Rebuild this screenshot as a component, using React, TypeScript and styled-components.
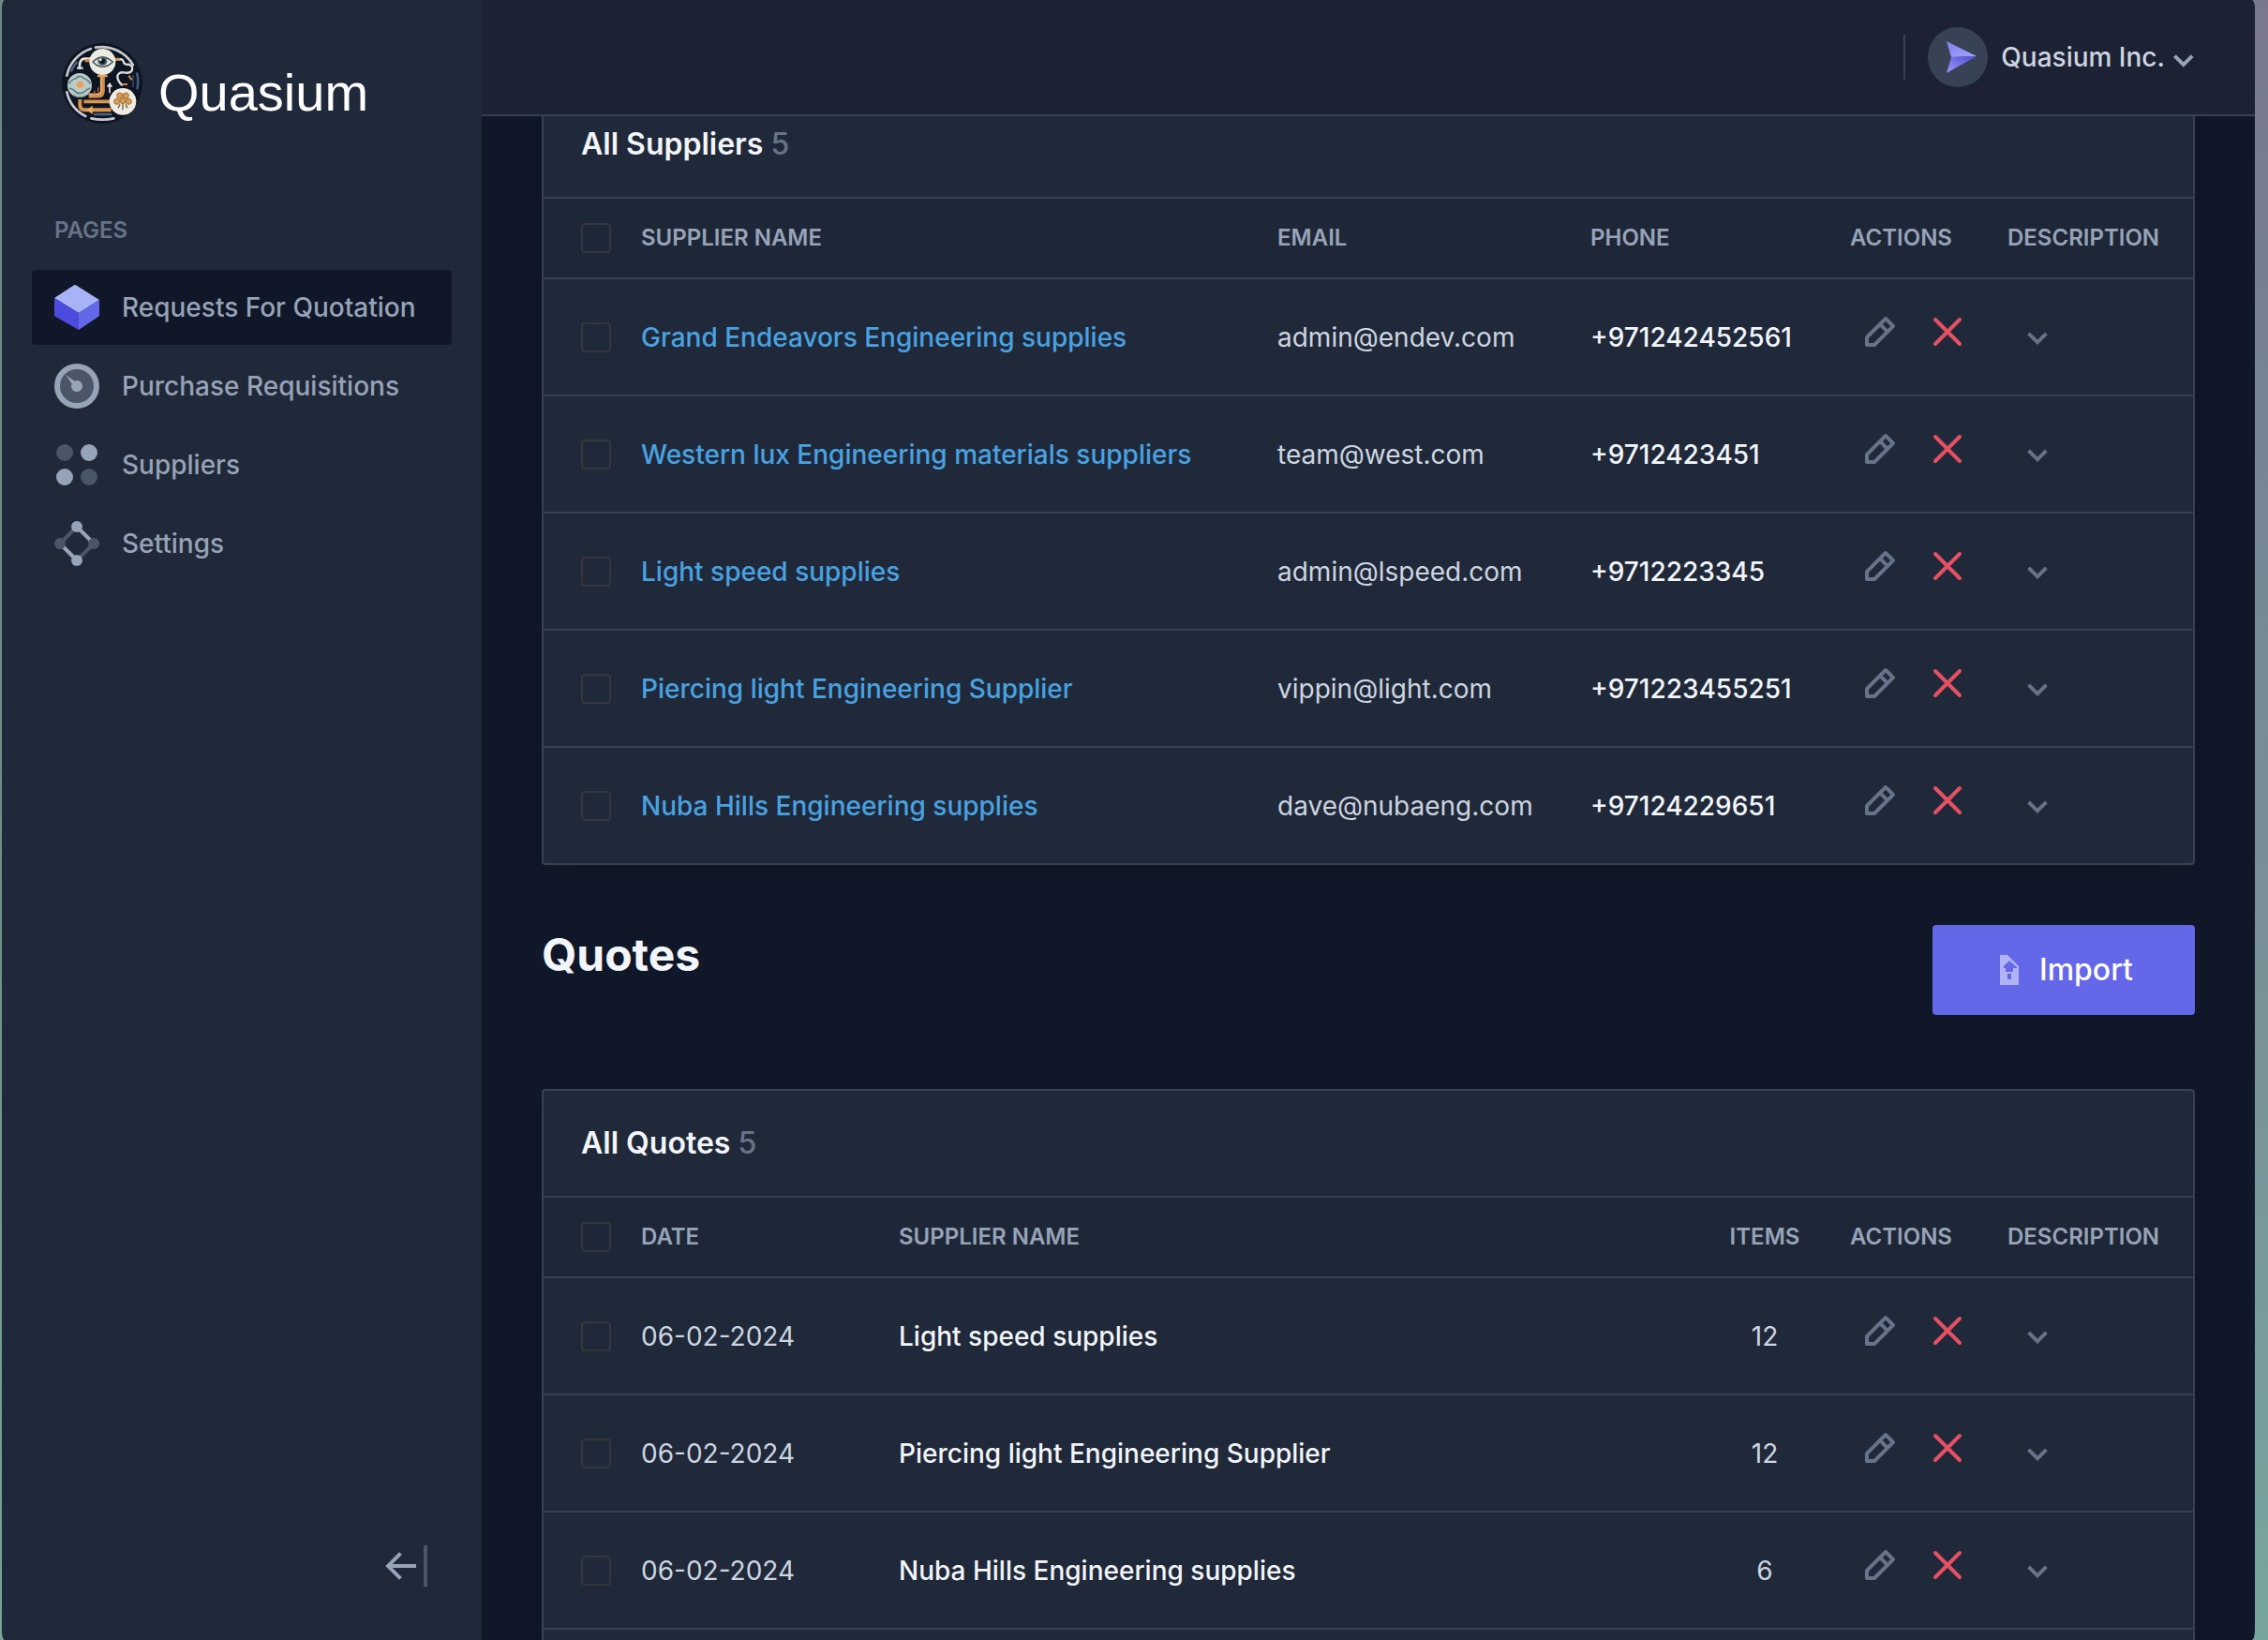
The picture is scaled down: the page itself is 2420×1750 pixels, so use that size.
import React from 'react';
import styled, { createGlobalStyle } from 'styled-components';

const color = {
  page: '#101728',
  panel: '#202939',
  head: '#1e2737',
  header: '#1c2234',
  line: '#364152',
  muted: '#667389',
  soft: '#97a3b7',
  text: '#cdd5e0',
  bright: '#f2f5f9',
  link: '#49a2e1',
  danger: '#e75064',
  accent: '#6468e8',
  box: '#34363b',
  dim: '#4a5568',
};

const GlobalStyle = createGlobalStyle`
  *, *::before, *::after { box-sizing: border-box; }
  body {
    margin: 0;
    font-family: Inter, "Liberation Sans", sans-serif;
    font-size: 28px;
    line-height: 44px;
    color: ${color.text};
    -webkit-font-smoothing: antialiased;
  }
  h1, h2, h3, p { margin: 0; }
  button { display: block; font: inherit; color: inherit; background: none; border: 0; padding: 0; cursor: pointer; }
  a { color: inherit; text-decoration: none; }
  svg { display: block; flex: none; }
`;

const Desktop = styled.div`
  height: 100vh;
  padding: 0 14px 0 2px;
  overflow: hidden;
  background:
    linear-gradient(#6f8a86, #6f8e88 50%, #74a598) 0 0 / 50% 100% no-repeat,
    linear-gradient(#7a788f, #758494 25%, #7a9097 60%, #76a59f);
`;

const Window = styled.div`
  display: flex;
  height: 100%;
  overflow: hidden;
  border-radius: 3px / 12px;
  background: ${color.page};
`;

const Sidebar = styled.aside`
  flex: none;
  display: flex;
  flex-direction: column;
  width: 512px;
  padding: 45px 32px 55px;
  background: ${color.panel};
`;

const Brand = styled.a`
  display: flex;
  align-items: flex-end;
  gap: 16px;
  margin: 0 0 95px 31px;
`;

const BrandName = styled.span`
  font-family: "Liberation Sans", Arial, sans-serif;
  font-size: 56px;
  line-height: 68px;
  color: #fff;
`;

const NavLabel = styled.h3`
  padding-left: 24px;
  margin-bottom: 24px;
  font-size: 24px;
  line-height: 36px;
  font-weight: 600;
  text-transform: uppercase;
  color: ${color.muted};
`;

const NavList = styled.nav`
  display: flex;
  flex-direction: column;
  gap: 4px;
`;

const NavItem = styled.a<{ $active?: boolean }>`
  display: flex;
  align-items: center;
  gap: 24px;
  height: 80px;
  padding: 0 24px;
  border-radius: 4px;
  font-weight: 500;
  color: ${color.soft};
  background: ${(p) => (p.$active ? color.page : 'transparent')};
`;

const Collapse = styled.button`
  align-self: flex-end;
  margin: auto 24px 0 0;
`;

const Main = styled.div`
  flex: 1;
  min-width: 0;
  display: flex;
  flex-direction: column;
`;

const Header = styled.header`
  position: relative;
  z-index: 1;
  flex: none;
  display: flex;
  align-items: center;
  justify-content: flex-end;
  gap: 24px;
  height: 124px;
  padding: 0 64px;
  border-bottom: 2px solid ${color.line};
  background: ${color.header};
`;

const Divider = styled.span`
  width: 2px;
  height: 48px;
  background: ${color.line};
`;

const UserButton = styled.button`
  display: flex;
  align-items: center;
  gap: 8px;
  font-weight: 500;
`;

const UserName = styled.span`
  padding-left: 6px;
`;

/* The list is scrolled so that its first card slides under the header. */
const Content = styled.main`
  margin-top: -28px;
  padding: 0 64px;
`;

const Card = styled.section<{ $continues?: boolean }>`
  border: 2px solid ${color.line};
  border-radius: 4px;
  padding-bottom: ${(p) => (p.$continues ? '48px' : '0')};
  background: ${color.panel};
  box-shadow: 0 20px 30px -6px rgba(0, 0, 0, 0.06);
`;

const CardTitle = styled.h2`
  padding: 32px 40px;
  font-size: 32px;
  line-height: 48px;
  font-weight: 600;
  color: ${color.bright};
`;

const Count = styled.span`
  font-weight: 500;
  color: ${color.muted};
`;

const Table = styled.table<{ $continues?: boolean }>`
  width: 100%;
  table-layout: fixed;
  border-collapse: separate;
  border-spacing: 0;

  ${(p) => (p.$continues ? '' : `tbody tr:last-child td { border-bottom: 0; height: 123px; }`)}
`;

const Th = styled.th<{ $w?: number; $center?: boolean }>`
  width: ${(p) => (p.$w ? `${p.$w}px` : 'auto')};
  height: 88px;
  padding: 0 16px;
  border-top: 2px solid ${color.line};
  border-bottom: 2px solid ${color.line};
  background: ${color.head};
  font-size: 24px;
  line-height: 36px;
  font-weight: 600;
  text-align: ${(p) => (p.$center ? 'center' : 'left')};
  text-transform: uppercase;
  white-space: nowrap;
  color: ${color.soft};

  &:first-child { padding-left: 40px; }
`;

const Td = styled.td<{ $tone?: string; $strong?: boolean; $center?: boolean }>`
  height: 125px;
  padding: 0 16px;
  border-bottom: 2px solid ${color.line};
  font-weight: ${(p) => (p.$strong ? 500 : 400)};
  text-align: ${(p) => (p.$center ? 'center' : 'left')};
  white-space: nowrap;
  color: ${(p) => p.$tone ?? color.text};

  &:first-child { padding-left: 40px; }
`;

const Check = styled.input.attrs({ type: 'checkbox' })`
  appearance: none;
  display: block;
  width: 32px;
  height: 32px;
  margin: 0;
  border: 2px solid ${color.box};
  border-radius: 4px;

  &:checked { background: ${color.accent}; }
`;

const Actions = styled.div`
  display: flex;
  align-items: center;
  gap: 20px;
  padding-bottom: 12px;
`;

const SectionHead = styled.div`
  display: flex;
  align-items: flex-start;
  justify-content: space-between;
  margin: 64px 0 79px;
`;

const SectionTitle = styled.h1`
  font-size: 48px;
  line-height: 64px;
  font-weight: 700;
  color: ${color.bright};
`;

const ImportButton = styled.button`
  display: flex;
  align-items: center;
  gap: 16px;
  height: 96px;
  padding: 0 66px;
  border-radius: 4px;
  background: ${color.accent};
  font-size: 32px;
  line-height: 48px;
  font-weight: 500;
  color: #fff;
`;

const LogoMark = () => (
  <svg width="88" height="88" viewBox="45 45 264 264" fill="none" aria-hidden="true">
    <circle cx="177" cy="177" r="129" fill="#0d1422" />
    <g stroke="#c9cad0" strokeWidth="8" strokeLinecap="round">
      <path d="M64 152A116 116 0 0 1 141 66" />
      <path d="M156 62A117 117 0 0 1 276 118" />
      <path d="M64 205A116 116 0 0 0 124 282" />
      <path d="M142 289Q178 297 214 289" />
    </g>
    <path d="M288 142A117 117 0 0 1 289 196" stroke="#3f5a7c" strokeWidth="8" />
    <path d="M276 150V190" stroke="#2d4462" strokeWidth="5" />
    <path d="M78 140Q86 118 98 108M150 276H208" stroke="#4c6484" strokeWidth="7" />
    <path d="M138 98H120Q106 100 105 118V132" stroke="#e8e6e0" strokeWidth="8" />
    <path d="M96 128H116" stroke="#c9dbe0" strokeWidth="7" />
    <path d="M122 104H138M218 100H232" stroke="#d58b45" strokeWidth="10" />
    <path d="M234 100Q244 98 246 110Q250 118 262 116Q278 122 272 136Q266 146 246 142Q226 140 226 158Q228 172 240 182" stroke="#dcdbda" strokeWidth="7" strokeLinecap="round" />
    <path d="M240 180H258M262 152L272 166" stroke="#cf8a4c" strokeWidth="6" />
    <path d="M178 150V200Q178 216 162 216H134" stroke="#d08d4c" strokeWidth="15" />
    <path d="M174 152V198Q174 212 160 212H134" stroke="#eab878" strokeWidth="4" />
    <path d="M162 153H194" stroke="#e8a25a" strokeWidth="8" />
    <path d="M118 235H204" stroke="#d9944f" strokeWidth="11" />
    <path d="M106 228V248Q108 262 124 262H206" stroke="#d9944f" strokeWidth="12" />
    <path d="M146 248L128 262L146 276Z" fill="#f0ad66" />
    <path d="M201 208V182M194 188L201 178L208 188" stroke="#e9e3e0" strokeWidth="5" />
    <path d="M164 190V206M152 200V212" stroke="#c2603c" strokeWidth="4" />
    <circle cx="178" cy="108" r="42" fill="#ecebe2" />
    <path d="M147 108Q178 78 211 108Q178 140 147 108Z" fill="#dfe6e2" stroke="#3c4a4e" strokeWidth="4" />
    <circle cx="178" cy="106" r="15" fill="#55686b" />
    <circle cx="178" cy="106" r="9" fill="#101820" />
    <circle cx="172" cy="101" r="4" fill="#f5f5f0" />
    <circle cx="105" cy="183" r="39" fill="#b9ccc9" />
    <path d="M70 178Q84 162 92 162Q105 146 120 162Q130 164 140 178" stroke="#5f7b80" strokeWidth="5" />
    <path d="M72 192Q86 196 92 204Q105 214 120 204Q128 196 138 192" stroke="#5f7b80" strokeWidth="5" />
    <path d="M84 214Q105 226 126 214" stroke="#7d999a" strokeWidth="4" />
    <circle cx="106" cy="181" r="11" fill="#e8a256" />
    <circle cx="243" cy="235" r="43" fill="#efebe0" />
    <g fill="#dd9f52" stroke="#9a6c38" strokeWidth="3">
      <circle cx="233" cy="216" r="9" />
      <circle cx="253" cy="216" r="9" />
      <circle cx="224" cy="235" r="9" />
      <circle cx="262" cy="235" r="9" />
      <circle cx="243" cy="233" r="9" />
    </g>
    <path d="M243 242V262M234 244L228 256M252 244L258 256" stroke="#6f5a42" strokeWidth="4" />
  </svg>
);

const CubeIcon = () => (
  <svg width="48" height="48" viewBox="0 0 24 24" aria-hidden="true">
    <path fill="#a8b3f7" d="M13 15l11-7L11.504.136a1 1 0 00-1.019.007L0 7l13 8z" />
    <path fill="#4d4ade" d="M13 15L0 7v9c0 .355.189.685.496.864L13 24v-9z" />
    <path fill="#6468e8" d="M13 15.047V24l10.573-7.181A.999.999 0 0024 16V8l-11 7.047z" />
  </svg>
);

const GaugeIcon = () => (
  <svg width="48" height="48" viewBox="0 0 24 24" aria-hidden="true">
    <circle cx="12" cy="12" r="12" fill={color.soft} />
    <circle cx="12" cy="12" r="9" fill={color.dim} />
    <path fill={color.soft} d="M12 15c-1.654 0-3-1.346-3-3 0-.462.113-.894.3-1.285L6 6l4.714 3.301A2.973 2.973 0 0112 9c1.654 0 3 1.346 3 3s-1.346 3-3 3z" />
  </svg>
);

const DotsIcon = () => (
  <svg width="48" height="48" viewBox="0 0 24 24" aria-hidden="true">
    <g fill={color.dim}>
      <circle cx="5.5" cy="5.5" r="4.5" />
      <circle cx="18.5" cy="18.5" r="4.5" />
    </g>
    <g fill={color.soft}>
      <circle cx="18.5" cy="5.5" r="4.5" />
      <circle cx="5.5" cy="18.5" r="4.5" />
    </g>
  </svg>
);

const NodesIcon = () => (
  <svg width="48" height="48" viewBox="0 0 24 24" aria-hidden="true">
    <path d="M3 12l9-9M12 21l9-9" stroke={color.dim} strokeWidth="2" />
    <path d="M12 3l9 9M3 12l9 9" stroke={color.soft} strokeWidth="2" />
    <g fill={color.dim}>
      <circle cx="3" cy="12" r="3" />
      <circle cx="21" cy="12" r="3" />
    </g>
    <g fill={color.soft}>
      <circle cx="12" cy="3" r="3" />
      <circle cx="12" cy="21" r="3" />
    </g>
  </svg>
);

const CollapseIcon = () => (
  <svg width="48" height="48" viewBox="0 0 24 24" aria-hidden="true">
    <g transform="rotate(180 12 12)">
      <path fill={color.soft} d="M19.586 11l-5-5L16 4.586 23.414 12 16 19.414 14.586 18l5-5H7v-2z" />
      <path fill={color.dim} d="M3 23H1V1h2z" />
    </g>
  </svg>
);

const Avatar = () => (
  <svg width="64" height="64" viewBox="0 0 64 64" aria-hidden="true">
    <defs>
      <linearGradient id="wingTop" x1="0" y1="0" x2="1" y2="1">
        <stop offset="0" stopColor="#7f7cf0" />
        <stop offset="1" stopColor="#a5a8fb" />
      </linearGradient>
      <linearGradient id="wingBottom" x1="0" y1="1" x2="1" y2="0">
        <stop offset="0" stopColor="#9a9af8" />
        <stop offset="1" stopColor="#504bd6" />
      </linearGradient>
    </defs>
    <circle cx="32" cy="32" r="32" fill="#374355" />
    <path d="M20 15L52 31L25 32Z" fill="url(#wingTop)" />
    <path d="M20 49L52 31L25 32Z" fill="url(#wingBottom)" />
  </svg>
);

const HeaderChevron = () => (
  <svg width="24" height="24" viewBox="0 0 12 12" fill={color.soft} aria-hidden="true">
    <path d="M5.9 11.4L.5 6l1.4-1.4 4 4 4-4L11.3 6z" />
  </svg>
);

const PencilIcon = () => (
  <svg width="64" height="64" viewBox="0 0 32 32" fill={color.muted} aria-hidden="true">
    <path d="M19.7 8.3c-.4-.4-1-.4-1.4 0l-10 10c-.2.2-.3.4-.3.7v4c0 .6.4 1 1 1h4c.3 0 .5-.1.7-.3l10-10c.4-.4.4-1 0-1.4l-4-4zM12.6 22H10v-2.6l6-6 2.6 2.6-6 6zm7.4-7.4L17.4 12l1.6-1.6 2.6 2.6-1.6 1.6z" />
  </svg>
);

const CrossIcon = () => (
  <svg width="40" height="40" viewBox="0 0 40 40" fill="none" aria-hidden="true">
    <path d="M7 7l26 26M33 7L7 33" stroke={color.danger} strokeWidth="4" strokeLinecap="round" />
  </svg>
);

const RowChevron = () => (
  <svg width="64" height="64" viewBox="0 0 32 32" fill={color.muted} aria-hidden="true">
    <path d="M16 20l-5.4-5.4 1.4-1.4 4 4 4-4 1.4 1.4z" />
  </svg>
);

const ImportIcon = () => (
  <svg width="32" height="32" viewBox="0 0 32 32" aria-hidden="true">
    <path
      fill="#b1b4f4"
      fillRule="evenodd"
      d="M6 0h8l12 12v20H6zM16 6l-6 6v2h2v4h8v-4h4v-1zM14 20h4v6h-4z"
    />
  </svg>
);

const nav = [
  { label: 'Requests For Quotation', Icon: CubeIcon, active: true },
  { label: 'Purchase Requisitions', Icon: GaugeIcon },
  { label: 'Suppliers', Icon: DotsIcon },
  { label: 'Settings', Icon: NodesIcon },
];

const suppliers = [
  { name: 'Grand Endeavors Engineering supplies', email: 'admin@endev.com', phone: '+971242452561' },
  { name: 'Western lux Engineering materials suppliers', email: 'team@west.com', phone: '+9712423451' },
  { name: 'Light speed supplies', email: 'admin@lspeed.com', phone: '+9712223345' },
  { name: 'Piercing light Engineering Supplier', email: 'vippin@light.com', phone: '+971223455251' },
  { name: 'Nuba Hills Engineering supplies', email: 'dave@nubaeng.com', phone: '+97124229651' },
];

const quotes = [
  { date: '06-02-2024', supplier: 'Light speed supplies', items: 12 },
  { date: '06-02-2024', supplier: 'Piercing light Engineering Supplier', items: 12 },
  { date: '06-02-2024', supplier: 'Nuba Hills Engineering supplies', items: 6 },
];

const RowControls = ({ name }: { name: string }) => (
  <>
    <Td>
      <Actions>
        <button type="button" aria-label={`Edit ${name}`}>
          <PencilIcon />
        </button>
        <button type="button" aria-label={`Delete ${name}`}>
          <CrossIcon />
        </button>
      </Actions>
    </Td>
    <Td>
      <button type="button" aria-label={`Show description of ${name}`}>
        <RowChevron />
      </button>
    </Td>
  </>
);

export default function App() {
  return (
    <Desktop>
      <GlobalStyle />
      <Window>
        <Sidebar>
          <Brand href="#">
            <LogoMark />
            <BrandName>Quasium</BrandName>
          </Brand>
          <NavLabel>Pages</NavLabel>
          <NavList>
            {nav.map(({ label, Icon, active }) => (
              <NavItem key={label} href="#" $active={active}>
                <Icon />
                {label}
              </NavItem>
            ))}
          </NavList>
          <Collapse type="button" aria-label="Collapse sidebar">
            <CollapseIcon />
          </Collapse>
        </Sidebar>

        <Main>
          <Header>
            <Divider />
            <UserButton type="button">
              <Avatar />
              <UserName>Quasium Inc.</UserName>
              <HeaderChevron />
            </UserButton>
          </Header>

          <Content>
            <Card>
              <CardTitle>
                All Suppliers <Count>5</Count>
              </CardTitle>
              <Table>
                <thead>
                  <tr>
                    <Th $w={88}>
                      <Check aria-label="Select all suppliers" />
                    </Th>
                    <Th>Supplier name</Th>
                    <Th $w={334}>Email</Th>
                    <Th $w={277}>Phone</Th>
                    <Th $w={168}>Actions</Th>
                    <Th $w={214}>Description</Th>
                  </tr>
                </thead>
                <tbody>
                  {suppliers.map((s) => (
                    <tr key={s.name}>
                      <Td>
                        <Check aria-label={`Select ${s.name}`} />
                      </Td>
                      <Td $tone={color.link} $strong>
                        <a href="#">{s.name}</a>
                      </Td>
                      <Td>{s.email}</Td>
                      <Td $tone={color.bright} $strong>
                        {s.phone}
                      </Td>
                      <RowControls name={s.name} />
                    </tr>
                  ))}
                </tbody>
              </Table>
            </Card>

            <SectionHead>
              <SectionTitle>Quotes</SectionTitle>
              <ImportButton type="button">
                <ImportIcon />
                Import
              </ImportButton>
            </SectionHead>

            <Card $continues>
              <CardTitle>
                All Quotes <Count>5</Count>
              </CardTitle>
              <Table $continues>
                <thead>
                  <tr>
                    <Th $w={88}>
                      <Check aria-label="Select all quotes" />
                    </Th>
                    <Th $w={275}>Date</Th>
                    <Th>Supplier name</Th>
                    <Th $w={150} $center>
                      Items
                    </Th>
                    <Th $w={168}>Actions</Th>
                    <Th $w={214}>Description</Th>
                  </tr>
                </thead>
                <tbody>
                  {quotes.map((q) => (
                    <tr key={q.supplier}>
                      <Td>
                        <Check aria-label={`Select quote from ${q.supplier}`} />
                      </Td>
                      <Td>{q.date}</Td>
                      <Td $tone={color.bright} $strong>
                        {q.supplier}
                      </Td>
                      <Td $center>{q.items}</Td>
                      <RowControls name={q.supplier} />
                    </tr>
                  ))}
                </tbody>
              </Table>
            </Card>
          </Content>
        </Main>
      </Window>
    </Desktop>
  );
}
